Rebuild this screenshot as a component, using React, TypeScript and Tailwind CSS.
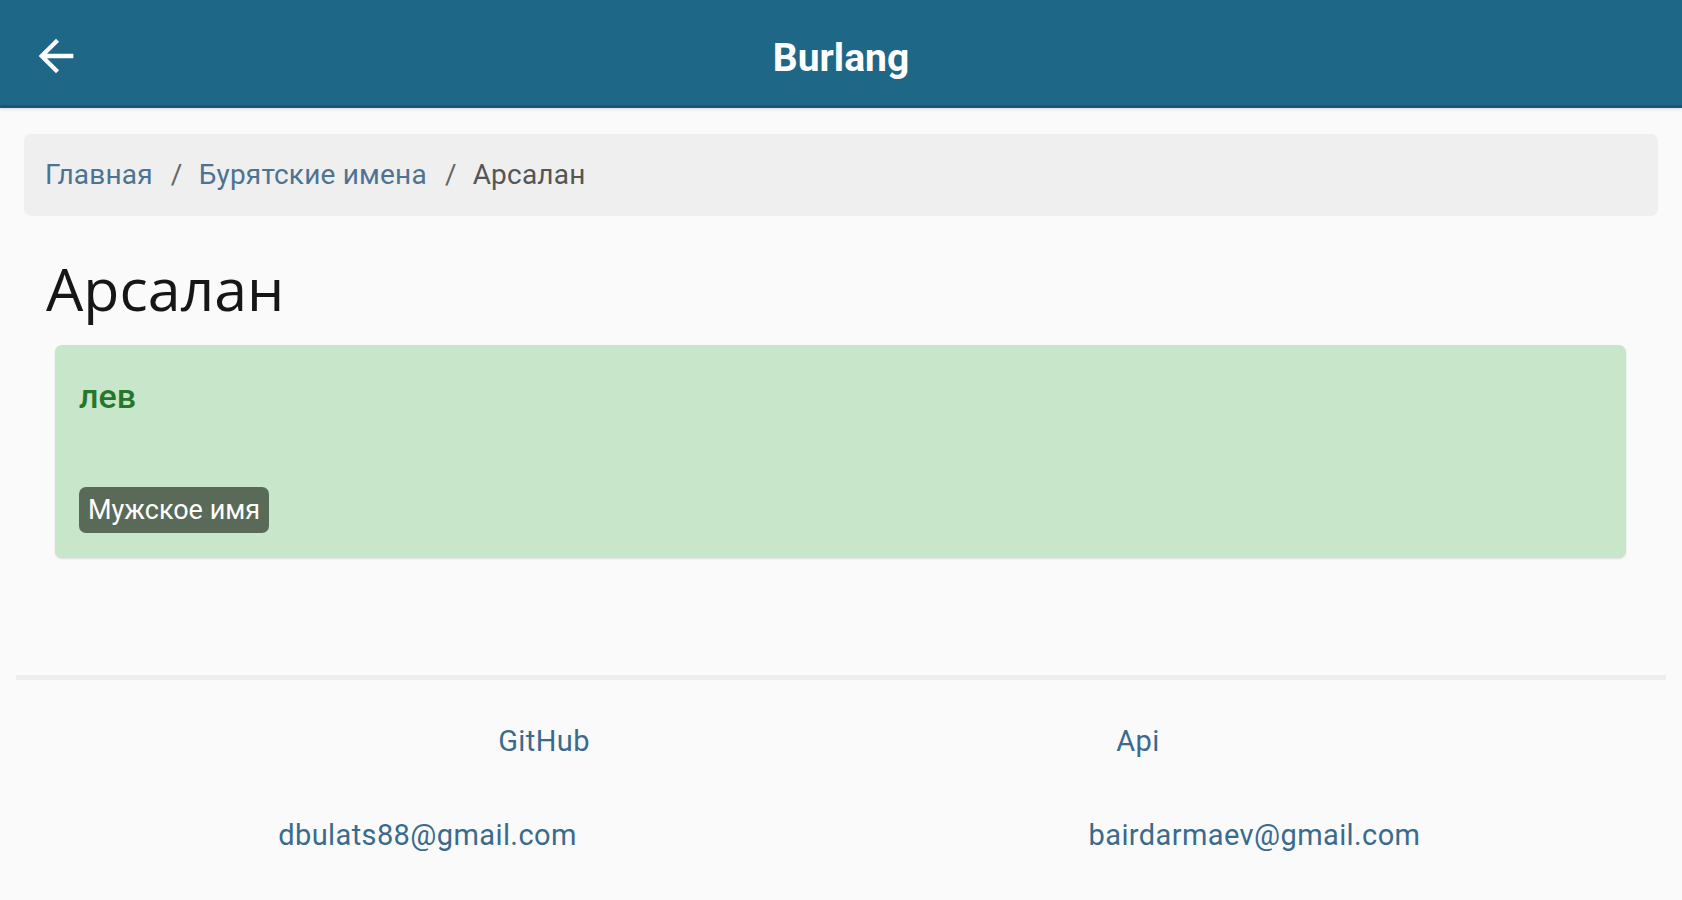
import React from "react";

function BackArrow() {
  return (
    <svg width="52" height="52" viewBox="0 0 24 24" fill="#ffffff" aria-hidden="true">
      <path d="M20 11H7.83l5.59-5.59L12 4l-8 8 8 8 1.41-1.41L7.83 13H20v-2z" />
    </svg>
  );
}

export default function App() {
  return (
    <div
      className="min-h-[900px] w-full bg-[#fafafa]"
      style={{ fontFamily: "Roboto, 'Noto Sans', Arial, sans-serif" }}
    >
      <header className="relative flex h-[108px] items-center justify-center border-b-[3px] border-[#175776] bg-[#1e6786] pt-[12px] shadow-[0_1px_3px_rgba(0,0,0,0.15)]">
        <div className="absolute left-[30px] top-[30px]">
          <BackArrow />
        </div>
        <h1 className="text-[39px] font-bold leading-none text-white">Burlang</h1>
      </header>

      <main className="pt-[26px]">
        <nav className="mx-[24px] flex h-[82px] items-center rounded-[7px] bg-[#efefef] px-[21px] text-[28px] leading-[40px] tracking-[0.2px]">
          <span className="text-[#4d7391]">Главная</span>
          <span className="pl-[18px] pr-[16px] text-[#666]">/</span>
          <span className="text-[#4d7391]">Бурятские имена</span>
          <span className="pl-[18px] pr-[16px] text-[#666]">/</span>
          <span className="text-[#555]">Арсалан</span>
        </nav>

        <h2
          className="ml-[46px] mt-[37px] text-[59px] font-normal leading-[70px] text-[#161616]"
          style={{ fontFamily: "'Open Sans', 'Noto Sans', sans-serif" }}
        >
          Арсалан
        </h2>

        <section className="ml-[55px] mr-[56px] mt-[22px] flex h-[213px] flex-col justify-between rounded-[7px] bg-[#c8e6c9] px-[24px] pb-[25px] pt-[31px] shadow-[0_1px_2px_rgba(0,0,0,0.12)]">
          <div className="text-[34px] font-medium leading-[40px] text-[#26762b]">лев</div>
          <div className="flex">
            <span className="flex h-[46px] items-center rounded-[7px] bg-[#5a6a58] px-[9px] text-[27px] font-normal text-white">
              Мужское имя
            </span>
          </div>
        </section>

        <div className="mx-[16px] mt-[117px] h-[5px] bg-[#eeeeee]" />

        <footer className="px-[14px] text-[29px] leading-[40px] tracking-[0.4px] text-[#3a6b8c]">
          <div className="mx-auto mt-[41px] grid w-[1188px] grid-cols-2 text-center">
            <span>GitHub</span>
            <span>Api</span>
          </div>
          <div className="mt-[54px] grid grid-cols-2 text-center">
            <span>dbulats88@gmail.com</span>
            <span>bairdarmaev@gmail.com</span>
          </div>
        </footer>
      </main>
    </div>
  );
}
